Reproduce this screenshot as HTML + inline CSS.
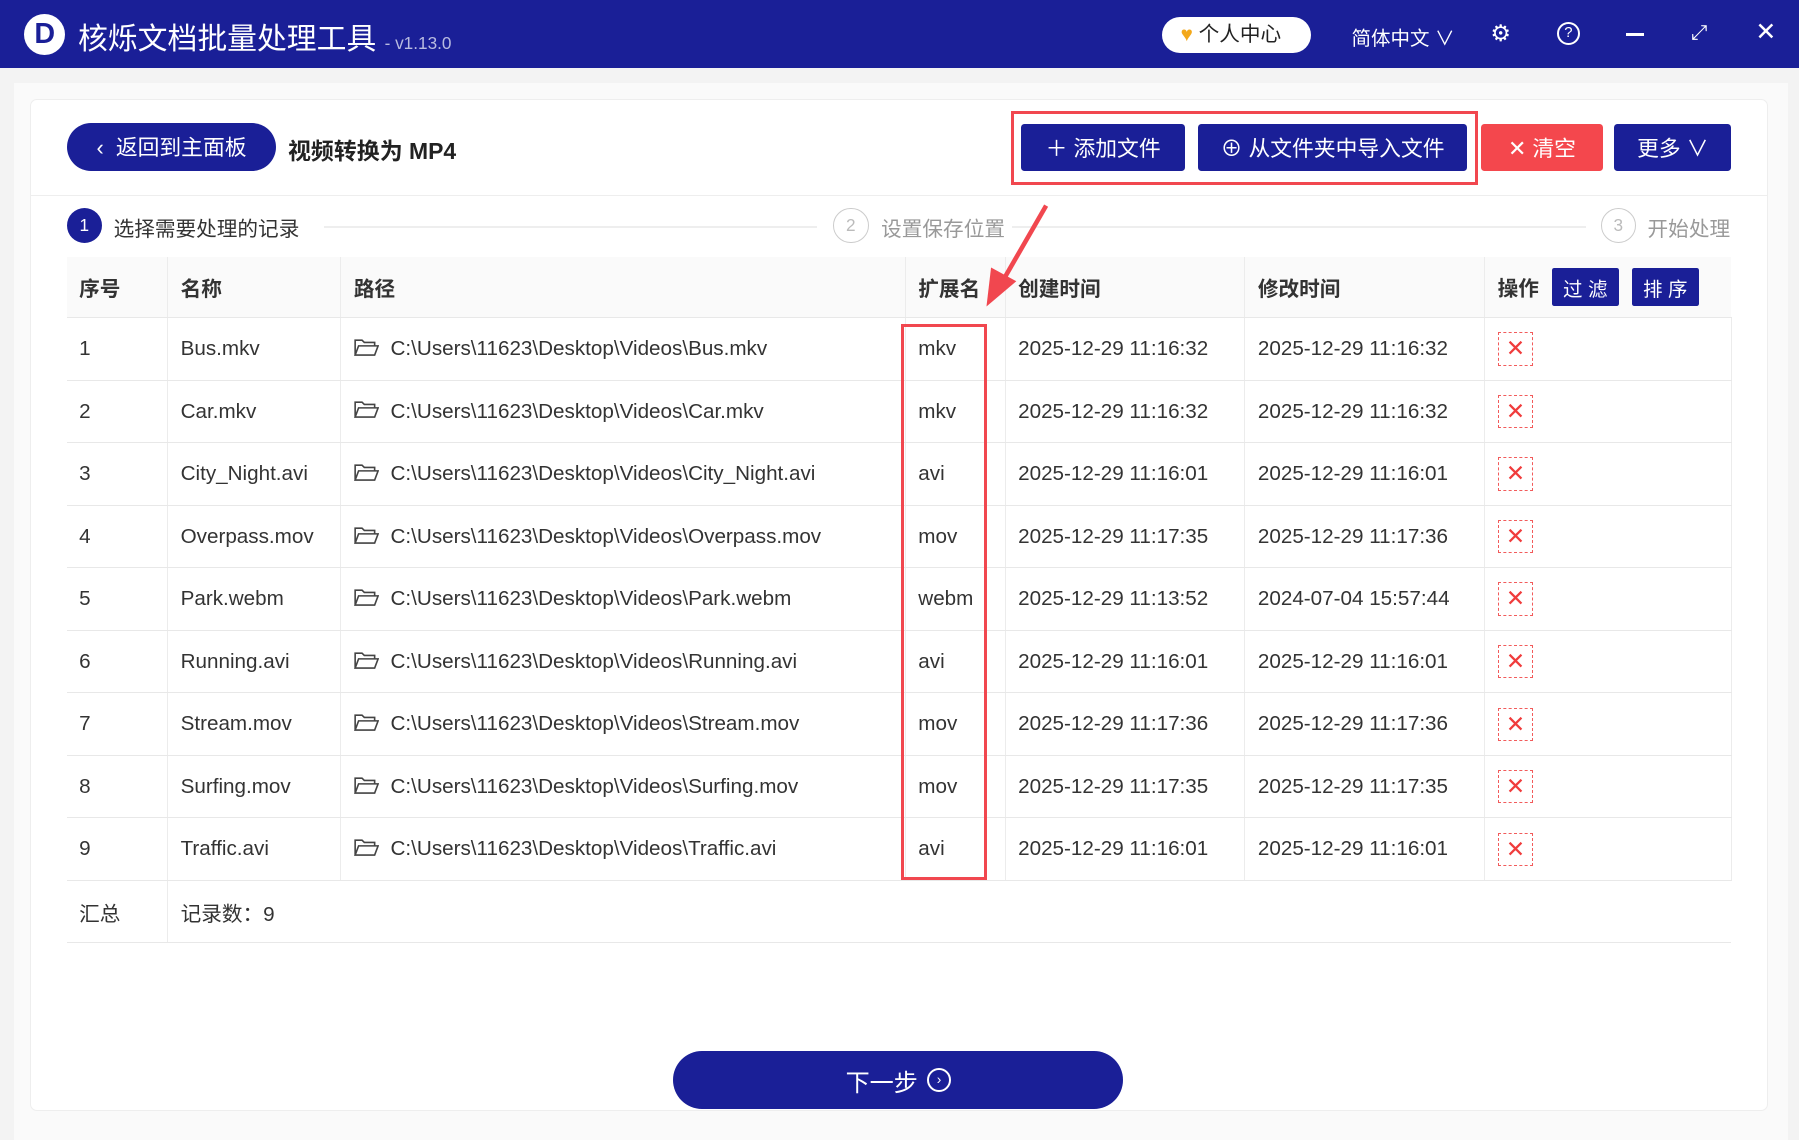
<!DOCTYPE html>
<html><head><meta charset="utf-8"><style>
*{margin:0;padding:0;box-sizing:border-box}
html,body{width:1799px;height:1140px;overflow:hidden;background:#f3f3f3}
#w{zoom:1.14732;width:1568px;height:994px;position:relative;font-family:"Liberation Sans","Noto Sans CJK SC",sans-serif;color:#333}
.a{position:absolute}
.tb{left:0;top:0;width:1568px;height:59px;background:#1a1f97;color:#fff}
.btn{position:absolute;background:#1a1f97;color:#fff;font-size:19px;display:flex;align-items:center;justify-content:center;border-radius:3px}
table{position:absolute;left:58px;top:224px;border-collapse:collapse;font-size:18px}
td,th{border-bottom:1px solid #e8e8e8;border-right:1px solid #ececec;text-align:left;padding-left:11px;font-weight:normal;white-space:nowrap}
th{height:53px;background:#fafafa;font-weight:bold;font-size:18px;color:#333}
td{height:54.5px;color:#333}
.x{display:inline-block;width:31px;height:29px;border:1px dashed #f25b5b;color:#f03c3c;text-align:center;line-height:27px;font-size:20px;vertical-align:middle}
.fo{display:inline-block;width:22px;height:15px;vertical-align:-1px;margin-right:10px}
</style></head><body><div id="w">
<div class="a tb">
 <div class="a" style="left:21px;top:12px;width:36px;height:36px;border-radius:50%;background:#fff;color:#1a1f97;font-weight:bold;font-size:25px;text-align:center;line-height:36px">D</div>
 <div class="a" style="left:68px;top:12px;font-size:26px">核烁文档批量处理工具 <span style="font-size:15px;color:#b8bbe0">- v1.13.0</span></div>
 <div class="a" style="left:1013px;top:15px;width:130px;height:31px;background:#fff;border-radius:16px;color:#222;font-size:18px;line-height:31px;padding-left:16px"><span style="color:#f3a81a">♥</span> 个人中心</div>
 <div class="a" style="left:1178px;top:19px;font-size:17px">简体中文 ∨</div>
 <div class="a" style="left:1299px;top:17px;font-size:20px">⚙</div>
 <div class="a" style="left:1357px;top:19px;width:20px;height:20px;border:2px solid #fff;border-radius:50%;font-size:13px;text-align:center;line-height:16px">?</div>
 <div class="a" style="left:1417px;top:29px;width:16px;height:2px;background:#fff"></div>
 <div class="a" style="left:1474px;top:18px;font-size:18px">⤢</div>
 <div class="a" style="left:1530px;top:15px;font-size:22px">✕</div>
</div>
<div class="a" style="left:12px;top:72px;width:1546px;height:922px;background:#fafafa"></div>
<div class="a" style="left:26px;top:86px;width:1515px;height:882px;background:#fff;border:1px solid #eee;border-radius:6px"></div>
<div class="btn" style="left:58px;top:107px;width:183px;height:42px;border-radius:21px;font-size:19px">‹&nbsp; 返回到主面板</div>
<div class="a" style="left:251px;top:115px;font-size:20px;font-weight:bold;color:#222">视频转换为 MP4</div>
<div class="a" style="left:881px;top:97px;width:407px;height:64px;border:3px solid #f1474f"></div>
<div class="btn" style="left:890px;top:108px;width:143px;height:41px">＋ 添加文件</div>
<div class="btn" style="left:1044px;top:108px;width:235px;height:41px">⊕ 从文件夹中导入文件</div>
<div class="btn" style="left:1291px;top:108px;width:106px;height:41px;background:#f4474d">✕ 清空</div>
<div class="btn" style="left:1407px;top:108px;width:102px;height:41px">更多 ∨</div>
<div class="a" style="left:27px;top:170px;width:1513px;height:1px;background:#eee"></div>
<div class="a" style="left:58px;top:181px;width:31px;height:31px;border-radius:50%;background:#1a1f97;color:#fff;text-align:center;line-height:31px;font-size:15px">1</div>
<div class="a" style="left:99px;top:185px;font-size:18px;color:#333">选择需要处理的记录</div>
<div class="a" style="left:282px;top:197px;width:430px;height:2px;background:#eee"></div>
<div class="a" style="left:726px;top:181px;width:31px;height:31px;border-radius:50%;border:1px solid #ccc;color:#bbb;text-align:center;line-height:29px;font-size:15px">2</div>
<div class="a" style="left:768px;top:185px;font-size:18px;color:#999">设置保存位置</div>
<div class="a" style="left:882px;top:197px;width:500px;height:2px;background:#eee"></div>
<div class="a" style="left:1395px;top:181px;width:31px;height:31px;border-radius:50%;border:1px solid #ccc;color:#bbb;text-align:center;line-height:29px;font-size:15px">3</div>
<div class="a" style="left:1436px;top:185px;font-size:18px;color:#999">开始处理</div>
<table>
<colgroup><col style="width:88px"><col style="width:151px"><col style="width:492px"><col style="width:87px"><col style="width:209px"><col style="width:209px"><col style="width:215px"></colgroup>
<tr><th>序号</th><th>名称</th><th>路径</th><th>扩展名</th><th>创建时间</th><th>修改时间</th><th style="border-right:none">操作 <span style="display:inline-block;background:#1a1f97;color:#fff;font-weight:normal;font-size:17px;padding:4px 10px;margin-left:6px;border-radius:2px">过 滤</span> <span style="display:inline-block;background:#1a1f97;color:#fff;font-weight:normal;font-size:17px;padding:4px 10px;margin-left:6px;border-radius:2px">排 序</span></th></tr>
<tr><td>1</td><td>Bus.mkv</td><td><svg class="fo" viewBox="0 0 22 15"><path d="M1 14V1h6l2 2h9v3M1 14l3-8h17l-3 8z" fill="none" stroke="#444" stroke-width="1.4"/></svg>C:\Users\11623\Desktop\Videos\Bus.mkv</td><td>mkv</td><td>2025-12-29 11:16:32</td><td>2025-12-29 11:16:32</td><td><span class="x">✕</span></td></tr>
<tr><td>2</td><td>Car.mkv</td><td><svg class="fo" viewBox="0 0 22 15"><path d="M1 14V1h6l2 2h9v3M1 14l3-8h17l-3 8z" fill="none" stroke="#444" stroke-width="1.4"/></svg>C:\Users\11623\Desktop\Videos\Car.mkv</td><td>mkv</td><td>2025-12-29 11:16:32</td><td>2025-12-29 11:16:32</td><td><span class="x">✕</span></td></tr>
<tr><td>3</td><td>City_Night.avi</td><td><svg class="fo" viewBox="0 0 22 15"><path d="M1 14V1h6l2 2h9v3M1 14l3-8h17l-3 8z" fill="none" stroke="#444" stroke-width="1.4"/></svg>C:\Users\11623\Desktop\Videos\City_Night.avi</td><td>avi</td><td>2025-12-29 11:16:01</td><td>2025-12-29 11:16:01</td><td><span class="x">✕</span></td></tr>
<tr><td>4</td><td>Overpass.mov</td><td><svg class="fo" viewBox="0 0 22 15"><path d="M1 14V1h6l2 2h9v3M1 14l3-8h17l-3 8z" fill="none" stroke="#444" stroke-width="1.4"/></svg>C:\Users\11623\Desktop\Videos\Overpass.mov</td><td>mov</td><td>2025-12-29 11:17:35</td><td>2025-12-29 11:17:36</td><td><span class="x">✕</span></td></tr>
<tr><td>5</td><td>Park.webm</td><td><svg class="fo" viewBox="0 0 22 15"><path d="M1 14V1h6l2 2h9v3M1 14l3-8h17l-3 8z" fill="none" stroke="#444" stroke-width="1.4"/></svg>C:\Users\11623\Desktop\Videos\Park.webm</td><td>webm</td><td>2025-12-29 11:13:52</td><td>2024-07-04 15:57:44</td><td><span class="x">✕</span></td></tr>
<tr><td>6</td><td>Running.avi</td><td><svg class="fo" viewBox="0 0 22 15"><path d="M1 14V1h6l2 2h9v3M1 14l3-8h17l-3 8z" fill="none" stroke="#444" stroke-width="1.4"/></svg>C:\Users\11623\Desktop\Videos\Running.avi</td><td>avi</td><td>2025-12-29 11:16:01</td><td>2025-12-29 11:16:01</td><td><span class="x">✕</span></td></tr>
<tr><td>7</td><td>Stream.mov</td><td><svg class="fo" viewBox="0 0 22 15"><path d="M1 14V1h6l2 2h9v3M1 14l3-8h17l-3 8z" fill="none" stroke="#444" stroke-width="1.4"/></svg>C:\Users\11623\Desktop\Videos\Stream.mov</td><td>mov</td><td>2025-12-29 11:17:36</td><td>2025-12-29 11:17:36</td><td><span class="x">✕</span></td></tr>
<tr><td>8</td><td>Surfing.mov</td><td><svg class="fo" viewBox="0 0 22 15"><path d="M1 14V1h6l2 2h9v3M1 14l3-8h17l-3 8z" fill="none" stroke="#444" stroke-width="1.4"/></svg>C:\Users\11623\Desktop\Videos\Surfing.mov</td><td>mov</td><td>2025-12-29 11:17:35</td><td>2025-12-29 11:17:35</td><td><span class="x">✕</span></td></tr>
<tr><td>9</td><td>Traffic.avi</td><td><svg class="fo" viewBox="0 0 22 15"><path d="M1 14V1h6l2 2h9v3M1 14l3-8h17l-3 8z" fill="none" stroke="#444" stroke-width="1.4"/></svg>C:\Users\11623\Desktop\Videos\Traffic.avi</td><td>avi</td><td>2025-12-29 11:16:01</td><td>2025-12-29 11:16:01</td><td><span class="x">✕</span></td></tr>
<tr><td style="height:48px">汇总</td><td colspan="6" style="border-right:none">记录数：9</td></tr>
</table>
<div class="a" style="left:785px;top:282px;width:75px;height:485px;border:3px solid #f1474f"></div>
<svg class="a" style="left:850px;top:175px" width="70" height="100"><path d="M62 4 L24 70" stroke="#f1474f" stroke-width="4"/><path d="M10 92 L14 58 L36 70 Z" fill="#f1474f"/></svg>
<div class="btn" style="left:587px;top:916px;width:392px;height:51px;border-radius:26px;font-size:21px">下一步 <span style="display:inline-block;width:21px;height:21px;border:2px solid #fff;border-radius:50%;font-size:12px;line-height:17px;text-align:center;margin-left:8px">›</span></div>
</div></body></html>
